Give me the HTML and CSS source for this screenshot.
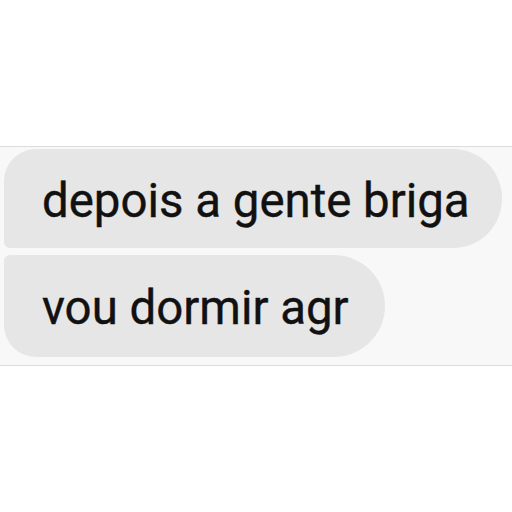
FILE: index.html
```html
<!DOCTYPE html>
<html>
<head>
<meta charset="utf-8">
<link rel="stylesheet" href="styles.css">
</head>
<body>
<div class="page">
  <div class="band">
    <div class="bubble first">depois a gente briga</div>
    <div class="bubble second">vou dormir agr</div>
  </div>
</div>
</body>
</html>
```
FILE: styles.css
```css
html, body {
  margin: 0;
  padding: 0;
  background: #ffffff;
}
.page {
  width: 512px;
  height: 512px;
  padding-top: 146px;
  box-sizing: border-box;
}
.band {
  background: #f8f8f8;
  border-top: 1px solid #dcdcdc;
  border-bottom: 1px solid #dcdcdc;
  height: 220px;
  box-sizing: border-box;
  padding: 2px 0 0 4px;
  display: flex;
  flex-direction: column;
  align-items: flex-start;
  gap: 7px;
}
.bubble {
  background: #e6e6e6;
  color: #111111;
  font-family: Roboto, "Liberation Sans", sans-serif;
  font-size: 47.4px;
  line-height: 55px;
  height: 99px;
  box-sizing: border-box;
  display: flex;
  align-items: center;
  padding: 5px 0 0 38px;
  -webkit-text-stroke: 0.4px #111111;
}
.first {
  width: 498px;
  border-radius: 32px 49px 49px 6px;
}
.second {
  width: 381px;
  height: 102px;
  border-radius: 6px 51px 51px 32px;
}
```
